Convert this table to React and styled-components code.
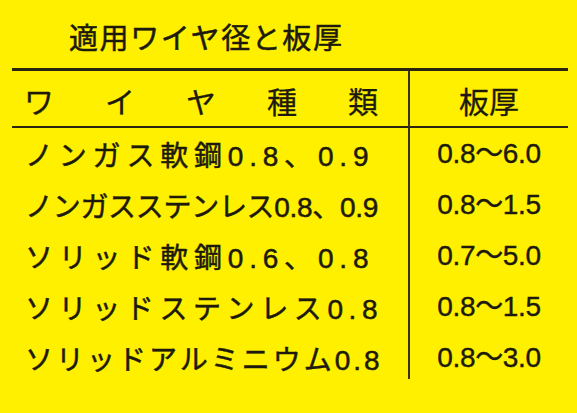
import React from 'react';
import styled, { createGlobalStyle } from 'styled-components';

const GlobalStyle = createGlobalStyle`
  html, body {
    margin: 0;
    padding: 0;
    background: #fff000;
  }
  body {
    font-family: "Liberation Sans", "Noto Sans CJK JP", sans-serif;
    color: #1d1a0c;
  }
`;

const Page = styled.div`
  width: 577px;
  height: 413px;
  box-sizing: border-box;
  padding: 16px 9px 0 12px;
  background: #fff000;
`;

const Title = styled.h1`
  margin: 0 0 12px 57px;
  font-family: "Noto Sans CJK JP", sans-serif;
  font-size: 29px;
  font-weight: 400;
  line-height: 40px;
  letter-spacing: 1.6px;
  -webkit-text-stroke: 0.5px #1d1a0c;
`;

const Table = styled.div`
  display: grid;
  grid-template-columns: 396px 160px;
  border-top: 3px solid #2a2410;
`;

const HeadCell = styled.div`
  height: 57px;
  box-sizing: border-box;
  display: flex;
  align-items: center;
  justify-content: ${(p) => (p.spread ? 'space-between' : 'center')};
  padding: ${(p) => (p.spread ? '2px 30px 0 12px' : '2px 0 0')};
  border-bottom: 2px solid #2a2410;
  border-left: ${(p) => (p.divider ? '2px solid #3a3010' : 'none')};
  font-family: "Noto Sans CJK JP", sans-serif;
  font-size: 30px;
  -webkit-text-stroke: 0.3px #1d1a0c;
`;

const NameCell = styled.div`
  height: 51px;
  display: flex;
  align-items: center;
  padding-left: 13px;
  font-size: 28px;
  white-space: nowrap;
  letter-spacing: ${(p) => p.spacing}px;
  -webkit-text-stroke: 0.5px #1d1a0c;
`;

const ThickCell = styled.div`
  height: ${(p) => (p.last ? '47px' : '51px')};
  align-self: start;
  box-sizing: border-box;
  border-left: 2px solid #3a3010;
  font-size: 28px;
  line-height: 51px;
  text-align: center;
  letter-spacing: -0.3px;
  white-space: nowrap;
  -webkit-text-stroke: 0.4px #1d1a0c;
`;

const rows = [
  { name: 'ノンガス軟鋼0.8、0.9', spacing: 5.8, thick: '0.8〜6.0' },
  { name: 'ノンガスステンレス0.8、0.9', spacing: -0.3, thick: '0.8〜1.5' },
  { name: 'ソリッド軟鋼0.6、0.8', spacing: 5.8, thick: '0.7〜5.0' },
  { name: 'ソリッドステンレス0.8', spacing: 5.6, thick: '0.8〜1.5' },
  { name: 'ソリッドアルミニウム0.8', spacing: 3, thick: '0.8〜3.0' },
];

const App = () => (
  <>
    <GlobalStyle />
    <Page>
      <Title>適用ワイヤ径と板厚</Title>
      <Table>
        <HeadCell spread>
          {'ワイヤ種類'.split('').map((c) => (
            <span key={c}>{c}</span>
          ))}
        </HeadCell>
        <HeadCell divider>板厚</HeadCell>
        {rows.map((r, i) => (
          <React.Fragment key={r.name}>
            <NameCell spacing={r.spacing}>{r.name}</NameCell>
            <ThickCell last={i === rows.length - 1}>{r.thick}</ThickCell>
          </React.Fragment>
        ))}
      </Table>
    </Page>
  </>
);

export default App;
